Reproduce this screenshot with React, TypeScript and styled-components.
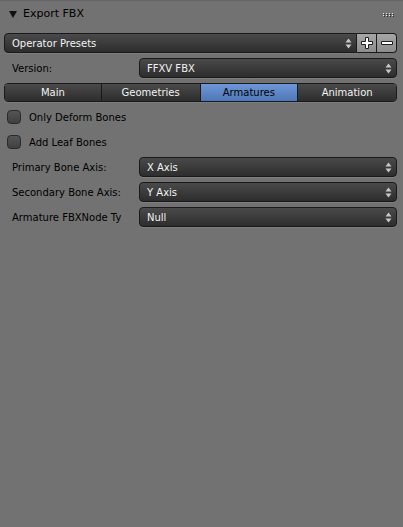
import React, { useState } from "react";
import styled, { createGlobalStyle } from "styled-components";

const GlobalStyle = createGlobalStyle`
  html, body {
    margin: 0;
    padding: 0;
    background: #727272;
  }
  body {
    font-family: "DejaVu Sans", "Liberation Sans", sans-serif;
    font-size: 10px;
  }
`;

const Panel = styled.div`
  width: 403px;
  height: 527px;
  background: #727272;
  display: flex;
  flex-direction: column;
  border-top: 1px solid #656565;
  box-sizing: border-box;
`;

const Header = styled.div`
  height: 25px;
  display: flex;
  align-items: center;
  padding: 0 8px 0 9px;
  color: #000;
  font-size: 11px;
`;

const Arrow = styled.span`
  width: 0;
  height: 0;
  border-left: 4px solid transparent;
  border-right: 4px solid transparent;
  border-top: 7px solid #111;
  margin-right: 6px;
  margin-top: 1px;
`;

const HeaderTitle = styled.span`
  flex: 1;
`;

const Grip = styled.div`
  display: grid;
  grid-template-columns: repeat(4, 1px);
  grid-template-rows: repeat(2, 1px);
  column-gap: 2px;
  row-gap: 1px;
  margin-right: 2px;
  margin-top: 2px;

  span {
    width: 1px;
    height: 1px;
    background: #e8e8e8;
    box-shadow: 1px 1px 0 #333;
  }
`;

const Content = styled.div`
  display: flex;
  flex-direction: column;
  gap: 5px;
  padding: 7px 6px 0 4px;
`;

const Row = styled.div`
  height: 20px;
  display: flex;
  align-items: center;
`;

const widgetBase = `
  box-sizing: border-box;
  height: 20px;
  border: 1px solid #1a1a1a;
  border-radius: 4px;
  background: linear-gradient(#4a4a4a, #2d2d2d);
  color: #f2f2f2;
  display: flex;
  align-items: center;
  position: relative;
  box-shadow: 0 1px 0 rgba(255, 255, 255, 0.08);
`;

const Dropdown = styled.div<{ $joined?: boolean }>`
  ${widgetBase}
  flex: 1;
  padding-left: 7px;
  ${(p) => (p.$joined ? "border-top-right-radius: 0; border-bottom-right-radius: 0;" : "")}
`;

const UpDown = styled.svg`
  position: absolute;
  right: 4px;
  top: 4px;
`;

const IconButton = styled.div<{ $last?: boolean }>`
  box-sizing: border-box;
  width: 20px;
  height: 20px;
  border: 1px solid #1a1a1a;
  border-left: none;
  background: linear-gradient(#a6a6a6, #8c8c8c);
  display: flex;
  align-items: center;
  justify-content: center;
  ${(p) => (p.$last ? "border-radius: 0 4px 4px 0;" : "")}
`;

const Label = styled.div`
  width: 135px;
  padding-left: 8px;
  box-sizing: border-box;
  color: #000;
  white-space: nowrap;
  overflow: hidden;
`;

const Tabs = styled.div`
  height: 19px;
  display: flex;
  border: 1px solid #1a1a1a;
  border-radius: 4px;
  overflow: hidden;
  box-sizing: border-box;
  box-shadow: 0 1px 0 rgba(255, 255, 255, 0.08);
`;

const Tab = styled.div<{ $active?: boolean; $w: number }>`
  width: ${(p) => p.$w}px;
  display: flex;
  align-items: center;
  justify-content: center;
  color: ${(p) => (p.$active ? "#000" : "#f2f2f2")};
  background: ${(p) =>
    p.$active
      ? "linear-gradient(#6d97d6, #4d77b8)"
      : "linear-gradient(#4a4a4a, #2d2d2d)"};
  border-left: 1px solid #1a1a1a;
  cursor: default;

  &:first-child {
    border-left: none;
  }
`;

const CheckRow = styled.label`
  height: 20px;
  display: flex;
  align-items: center;
  padding-left: 3px;
  color: #000;
  cursor: default;
`;

const CheckBox = styled.span<{ $on?: boolean }>`
  box-sizing: border-box;
  width: 14px;
  height: 14px;
  border: 1px solid #2a2a2a;
  border-radius: 4px;
  background: linear-gradient(#555, #404040);
  margin-right: 8px;
  display: flex;
  align-items: center;
  justify-content: center;
  color: #fff;
  font-size: 10px;
`;

const Arrows = () => (
  <UpDown width="7" height="11" viewBox="0 0 7 11">
    <path d="M3.5 0.5 L6.5 4.5 L0.5 4.5 Z" fill="#c8c8c8" />
    <path d="M3.5 10.5 L6.5 6.5 L0.5 6.5 Z" fill="#c8c8c8" />
  </UpDown>
);

const PlusIcon = () => (
  <svg width="14" height="14" viewBox="0 0 14 14">
    <path
      d="M5.5 1.5 h3 v4 h4 v3 h-4 v4 h-3 v-4 h-4 v-3 h4 z"
      fill="#fff"
      stroke="#1e1e1e"
      strokeWidth="1"
    />
  </svg>
);

const MinusIcon = () => (
  <svg width="14" height="14" viewBox="0 0 14 14">
    <path d="M1.5 5.5 h11 v3 h-11 z" fill="#fff" stroke="#1e1e1e" strokeWidth="1" />
  </svg>
);

const tabs = [
  { name: "Main", w: 97 },
  { name: "Geometries", w: 99 },
  { name: "Armatures", w: 98 },
  { name: "Animation", w: 99 },
];

const axes = [
  { label: "Primary Bone Axis:", value: "X Axis" },
  { label: "Secondary Bone Axis:", value: "Y Axis" },
  { label: "Armature FBXNode Ty", value: "Null" },
];

export default function App() {
  const [active, setActive] = useState("Armatures");
  const [checks, setChecks] = useState({ deform: false, leaf: false });

  return (
    <Panel>
      <GlobalStyle />
      <Header>
        <Arrow />
        <HeaderTitle>Export FBX</HeaderTitle>
        <Grip>
          {Array.from({ length: 8 }).map((_, i) => (
            <span key={i} />
          ))}
        </Grip>
      </Header>
      <Content>
        <Row>
          <Dropdown $joined>
            Operator Presets
            <Arrows />
          </Dropdown>
          <IconButton>
            <PlusIcon />
          </IconButton>
          <IconButton $last>
            <MinusIcon />
          </IconButton>
        </Row>
        <Row>
          <Label>Version:</Label>
          <Dropdown>
            FFXV FBX
            <Arrows />
          </Dropdown>
        </Row>
        <Tabs>
          {tabs.map((t) => (
            <Tab
              key={t.name}
              $w={t.w}
              $active={active === t.name}
              onClick={() => setActive(t.name)}
            >
              {t.name}
            </Tab>
          ))}
        </Tabs>
        <CheckRow onClick={() => setChecks({ ...checks, deform: !checks.deform })}>
          <CheckBox $on={checks.deform}>{checks.deform ? "✓" : ""}</CheckBox>
          Only Deform Bones
        </CheckRow>
        <CheckRow onClick={() => setChecks({ ...checks, leaf: !checks.leaf })}>
          <CheckBox $on={checks.leaf}>{checks.leaf ? "✓" : ""}</CheckBox>
          Add Leaf Bones
        </CheckRow>
        {axes.map((a) => (
          <Row key={a.label}>
            <Label>{a.label}</Label>
            <Dropdown>
              {a.value}
              <Arrows />
            </Dropdown>
          </Row>
        ))}
      </Content>
    </Panel>
  );
}
